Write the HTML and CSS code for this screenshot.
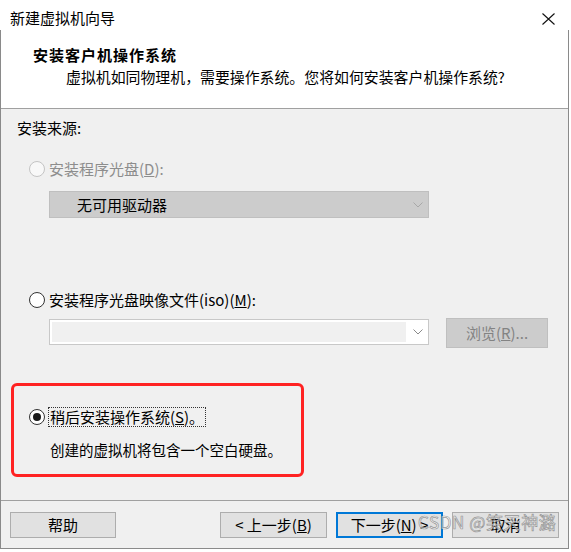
FILE: index.html
```html
<!DOCTYPE html>
<html lang="zh-CN">
<head>
<meta charset="utf-8">
<title>新建虚拟机向导</title>
<link rel="stylesheet" href="styles.css">
</head>
<body>
<div class="window">
  <div class="titlebar">
    <span class="title">新建虚拟机向导</span>
    <svg class="close" width="13" height="12" viewBox="0 0 13 12"><path d="M0.5 0.5 L12.5 11.5 M12.5 0.5 L0.5 11.5" stroke="#111" stroke-width="1.1" fill="none"/></svg>
  </div>
  <div class="client">
    <div class="header">
      <div class="h-title">安装客户机操作系统</div>
      <div class="h-sub">虚拟机如同物理机，需要操作系统。您将如何安装客户机操作系统?</div>
    </div>
    <div class="content">
      <div class="section-label">安装来源:</div>
      <div class="radio-row row1 disabled">
        <span class="radio"></span>
        <span class="label">安装程序光盘(<u>D</u>):</span>
      </div>
      <div class="combo combo-disabled">
        <span class="combo-text">无可用驱动器</span>
        <svg class="chevron" width="10" height="6" viewBox="0 0 10 6"><path d="M0.5 0.5 L5 5 L9.5 0.5" stroke="#a8a8a8" stroke-width="1" fill="none"/></svg>
      </div>
      <div class="radio-row row2">
        <span class="radio"></span>
        <span class="label">安装程序光盘映像文件(iso)(<u>M</u>):</span>
      </div>
      <div class="iso-row">
        <div class="combo combo-edit">
          <span class="edit-field"></span>
          <svg class="chevron" width="10" height="6" viewBox="0 0 10 6"><path d="M0.5 0.5 L5 5 L9.5 0.5" stroke="#8a8a8a" stroke-width="1" fill="none"/></svg>
        </div>
        <div class="btn btn-disabled">浏览(<u>R</u>)...</div>
      </div>
      <div class="highlight">
        <div class="radio-row row3">
          <span class="radio checked"></span>
          <span class="label focus">稍后安装操作系统(<u>S</u>)。</span>
        </div>
        <div class="desc">创建的虚拟机将包含一个空白硬盘。</div>
      </div>
    </div>
    <div class="footer">
      <div class="btn btn-help">帮助</div>
      <div class="nav">
        <div class="btn">&lt; 上一步(<u>B</u>)</div>
        <div class="btn btn-default">下一步(<u>N</u>) &gt;</div>
        <div class="btn">取消</div>
      </div>
    </div>
  </div>
  <div class="watermark">CSDN @笑天神潞</div>
</div>
</body>
</html>
```
FILE: styles.css
```css
* { box-sizing: border-box; }
html, body { margin: 0; padding: 0; background: #ffffff; }
body {
  font-family: "Noto Sans CJK SC", "Noto Sans", sans-serif;
  font-size: 15px;
  color: #000;
}
.window {
  position: relative;
  width: 569px;
  height: 552px;
}
.titlebar {
  height: 30px;
  display: flex;
  align-items: center;
  padding: 5px 14px 0 10px;
  background: #fff;
}
.title { font-size: 15px; line-height: 22px; }
.close { margin-left: auto; margin-top: 3px; }
.client {
  border-left: 1px solid #8a8a8a;
  border-right: 1px solid #8a8a8a;
  border-bottom: 1px solid #8a8a8a;
}
.header {
  height: 79px;
  background: #fff;
  border-bottom: 1px solid #a0a0a0;
  padding-top: 15px;
}
.h-title {
  font-weight: bold;
  font-size: 15px;
  letter-spacing: 1px;
  line-height: 20px;
  margin-left: 32px;
}
.h-sub {
  font-size: 14.9px;
  line-height: 20px;
  margin-top: 2px;
  margin-left: 65px;
}
.content {
  height: 392px;
  background: #f0f0f0;
  border-bottom: 1px solid #a0a0a0;
  padding-top: 9px;
}
.section-label {
  line-height: 20px;
  margin-left: 16px;
}
.radio-row {
  display: flex;
  align-items: center;
  height: 20px;
  margin-left: 28px;
}
.row1 { margin-top: 21px; }
.row2 { margin-top: 72px; }
.radio {
  width: 16px;
  height: 16px;
  border-radius: 50%;
  border: 1px solid #333;
  background: #fff;
  margin-right: 4px;
  flex: none;
  display: flex;
  align-items: center;
  justify-content: center;
}
.disabled .radio { border-color: #c4c4c4; background: #f8f8f8; }
.disabled .label { color: #8d8d8d; }
.radio.checked::after {
  content: "";
  width: 8px;
  height: 8px;
  border-radius: 50%;
  background: #1a1a1a;
}
.label { line-height: 20px; white-space: nowrap; }
.combo {
  width: 380px;
  display: flex;
  align-items: center;
  margin-left: 48px;
}
.combo-disabled {
  height: 27px;
  margin-top: 12px;
  background: #cccccc;
  border: 1px solid #bfbfbf;
  padding-left: 27px;
}
.combo-text { line-height: 20px; }
.chevron { margin-left: auto; margin-right: 5px; }
.iso-row {
  display: flex;
  align-items: flex-start;
  margin-top: 8px;
}
.combo-edit {
  height: 26px;
  margin-top: 1px;
  background: #fff;
  border: 1px solid #c8c8c8;
  padding: 2px 0 2px 2px;
}
.edit-field {
  width: 354px;
  height: 20px;
  background: #f0f0f0;
}
.btn {
  height: 26px;
  width: 107px;
  background: #e1e1e1;
  border: 1px solid #adadad;
  display: flex;
  align-items: center;
  justify-content: center;
  line-height: 20px;
  white-space: nowrap;
}
.btn-disabled {
  width: 102px;
  height: 30px;
  margin-left: 17px;
  background: #cccccc;
  border-color: #bfbfbf;
  color: #838383;
}
.highlight {
  margin-top: 35px;
  margin-left: 10px;
  width: 293px;
  height: 94px;
  border: 3px solid #ff2222;
  border-radius: 6px;
}
.row3 { margin-top: 21px; margin-left: 15px; }
.focus {
  border: 1px dotted #333;
  padding: 0 1px 0 1px;
  margin-left: -1px;
  line-height: 18px;
}
.desc {
  margin-top: 13px;
  margin-left: 36px;
  line-height: 20px;
  font-size: 14.5px;
}
.footer {
  height: 47px;
  background: #f0f0f0;
  display: flex;
  align-items: flex-start;
  padding: 11px 9px 0 9px;
}
.btn-help { width: 106px; }
.nav {
  margin-left: auto;
  display: flex;
  gap: 9px;
}
.btn-default { border: 2px solid #0078d7; }
.watermark {
  position: absolute;
  left: 418px;
  top: 511px;
  font-size: 17px;
  letter-spacing: 0.6px;
  line-height: 22px;
  color: rgba(255, 255, 255, 0.6);
  -webkit-text-stroke: 0.7px rgba(110, 110, 110, 0.7);
  white-space: nowrap;
  pointer-events: none;
}
```
